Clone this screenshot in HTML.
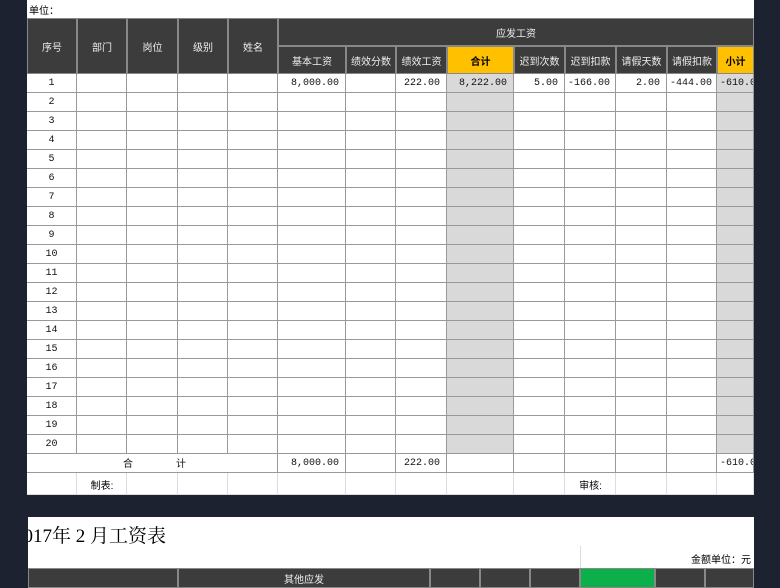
<!DOCTYPE html>
<html><head><meta charset="utf-8"><style>
body{margin:0;width:780px;height:585px;background:#1d2230;position:relative;overflow:hidden;font-family:"Liberation Sans","Noto Sans CJK SC",sans-serif;}
.p{position:absolute;background:#fff;overflow:hidden}
.c{position:absolute;box-sizing:border-box;font-size:10px;display:flex;align-items:center;justify-content:center;white-space:nowrap;overflow:hidden}
.h{background:#3c3c3c;color:#eee;border:1px solid #888}
.y{background:#ffc000;color:#000;font-weight:bold;border:1px solid #888}
.d{border-right:1px solid #999;border-bottom:1px solid #999;font-family:"Liberation Mono","Noto Sans CJK SC",monospace;color:#111}
.g{background:#d9d9d9}
.r{justify-content:flex-end;padding-right:6px}
.l{justify-content:flex-start;padding-left:3px}
.gr{background:#0bb04a}
.lt{border-color:#ddd}
</style></head><body>
<div class="p" style="left:27px;top:0;width:727px;height:495px"></div>
<div class="p" style="left:28px;top:517px;width:726px;height:68px">
<div style="position:absolute;left:-14px;top:4px;font-size:19px;font-family:'Liberation Serif','Noto Serif CJK SC',serif;color:#000;white-space:nowrap">2017年 2 月工资表</div>
<div style="position:absolute;right:3px;top:34px;font-size:10px;color:#000">金额单位：元</div>
<div style="position:absolute;left:552px;top:29px;width:1px;height:22px;background:#ddd"></div>
</div>
<div class="c" style="left:29px;top:0;height:18px;font-size:10px;color:#000">单位：</div>
<div id="t"></div>
<script>
const X=[27,77,127,178,228,278,346,396,447,514,565,616,667,717,754];
let s='';
const box=(x,y,w,h,cls,t)=>s+=`<div class="c ${cls}" style="left:${x}px;top:${y}px;width:${w}px;height:${h}px">${t}</div>`;
['序号','部门','岗位','级别','姓名'].forEach((t,i)=>box(X[i],18,X[i+1]-X[i],56,'h',t));
box(278,18,476,28,'h','应发工资');
const sub=['基本工资','绩效分数','绩效工资','合计','迟到次数','迟到扣款','请假天数','请假扣款','小计'];
sub.forEach((t,i)=>box(X[i+5],46,X[i+6]-X[i+5],28,(i==3||i==8)?'y':'h',t));
const v1=['8,000.00','','222.00','8,222.00','5.00','-166.00','2.00','-444.00','-610.00'];
for(let r=0;r<21;r++){const y=74+r*19;
 for(let i=0;i<14;i++){let cls='d',t='';
  if(i==0&&r<20)t=r+1;
  if(r==20&&i<5)continue;
  if(i>=5){t=(r==0)?v1[i-5]:'';if(r==20)t=['8,000.00','','222.00','','','','','','-610.00'][i-5];
   cls+=(i==13||i==10||i==12)?' l':' r';if((i==8||i==13)&&r<20)cls+=' g';}
  box(X[i],y,X[i+1]-X[i],19,cls,t);}
}
box(27,454,251,19,'d','<span style="position:absolute;left:96px">合</span><span style="position:absolute;left:149px">计</span>');
for(let i=0;i<14;i++)box(X[i],473,X[i+1]-X[i],22,'d lt','');
box(77,473,50,22,'','制表:');box(565,473,51,22,'','审核:');
const Y=[28,178,430,480,530,580,655,705,754];
for(let i=0;i<8;i++)box(Y[i],568,Y[i+1]-Y[i],20,i==5?'h gr':'h',i==1?'其他应发':'');
document.getElementById('t').innerHTML=s;
</script>
</body></html>
